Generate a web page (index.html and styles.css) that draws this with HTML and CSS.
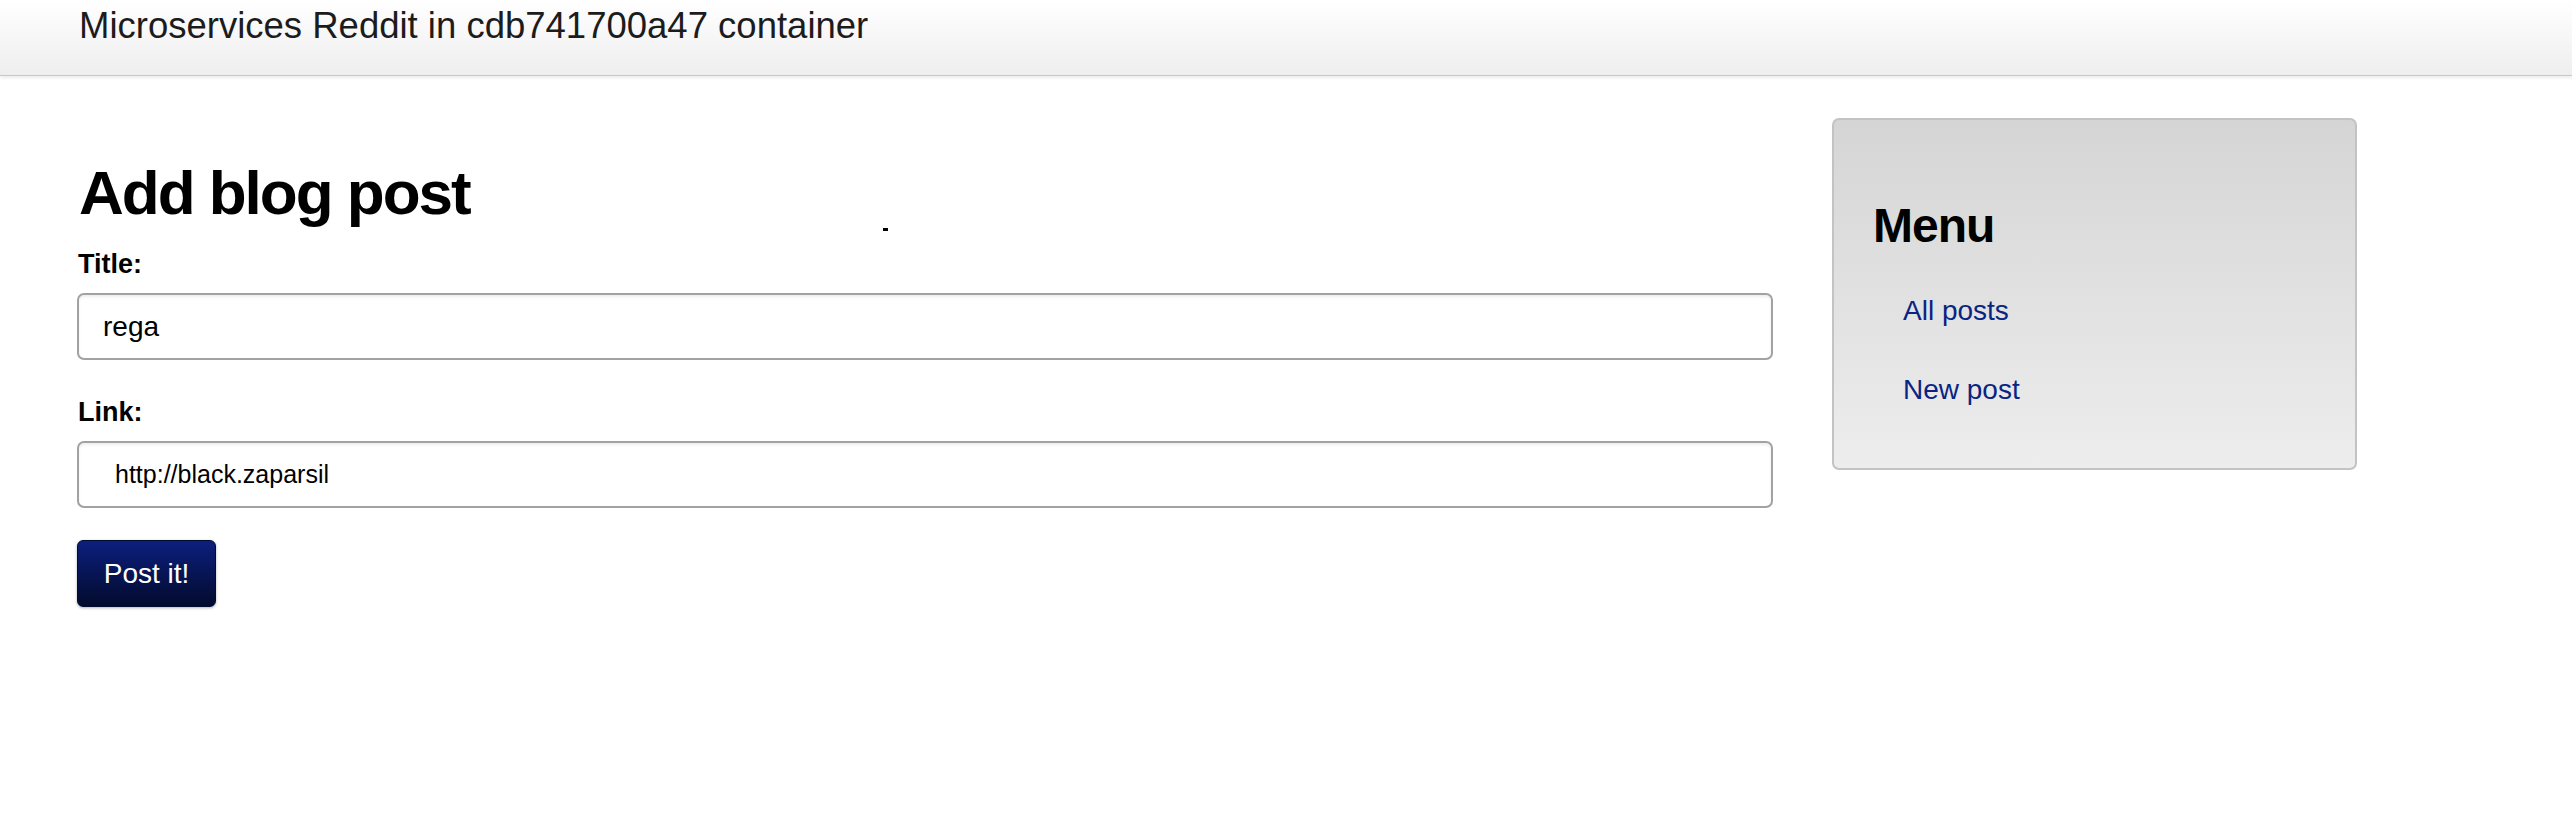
FILE: index.html
```html
<!DOCTYPE html>
<html>
<head>
<meta charset="utf-8">
<title>Microservices Reddit</title>
<link rel="stylesheet" href="styles.css">
</head>
<body>
<header class="topbar">
  <div class="brand">Microservices Reddit in cdb741700a47 container</div>
</header>
<div class="layout">
  <main class="main">
    <h1 class="page-title">Add blog post</h1>
    <form class="post-form">
      <label class="field-label" for="title">Title:</label>
      <input class="field-input" id="title" type="text" value="rega">
      <label class="field-label field-label-gap" for="link">Link:</label>
      <input class="field-input field-input-link" id="link" type="text" value="http://black.zaparsil">
      <button class="submit-btn" type="button">Post it!</button>
    </form>
  </main>
  <aside class="sidebar">
    <h2 class="sidebar-title">Menu</h2>
    <nav class="sidebar-nav">
      <a class="sidebar-link" href="#">All posts</a>
      <a class="sidebar-link" href="#">New post</a>
    </nav>
  </aside>
</div>
<span class="speck"></span>
</body>
</html>
```

FILE: styles.css
```css
html, body {
  margin: 0;
  padding: 0;
  background: #ffffff;
}

body {
  font-family: "Liberation Sans", Arial, Helvetica, sans-serif;
  color: #000;
  position: relative;
  min-height: 836px;
}

.topbar {
  height: 76px;
  box-sizing: border-box;
  padding: 8px 0 0 79px;
  background: linear-gradient(#ffffff, #eeeeee);
  border-bottom: 1px solid #c8c8c8;
  box-shadow: 0 2px 3px rgba(0, 0, 0, 0.08);
}

.brand {
  font-size: 36.5px;
  line-height: 36px;
  color: #1c1c1c;
}

.layout {
  display: flex;
  align-items: flex-start;
  gap: 59px;
  padding: 42px 0 0 77px;
}

.main {
  width: 1696px;
  display: flex;
  flex-direction: column;
}

.page-title {
  margin: 44px 0 0 2px;
  font-size: 62px;
  line-height: 62px;
  font-weight: bold;
  letter-spacing: -2px;
}

.post-form {
  display: flex;
  flex-direction: column;
  align-items: flex-start;
}

.field-label {
  margin: 27px 0 0 1px;
  font-size: 27px;
  line-height: 27px;
  font-weight: bold;
}

.field-label-gap {
  margin-top: 39px;
}

.field-input {
  margin-top: 15px;
  width: 100%;
  height: 67px;
  box-sizing: border-box;
  border: 2px solid #a2a2a2;
  border-radius: 7px;
  box-shadow: inset 0 2px 3px rgba(0, 0, 0, 0.07);
  padding: 0 24px;
  font-family: "Liberation Sans", Arial, Helvetica, sans-serif;
  font-size: 28px;
  color: #000;
  background: #fff;
  outline: none;
}

.field-input-link {
  padding-left: 36px;
  font-size: 25px;
}

.submit-btn {
  margin-top: 32px;
  width: 139px;
  height: 67px;
  box-sizing: border-box;
  border: 1px solid #000c30;
  border-radius: 6px;
  background: linear-gradient(#0c1f7e, #020b2c);
  box-shadow: 0 1px 3px rgba(0, 0, 0, 0.3);
  color: #fff;
  font-family: "Liberation Sans", Arial, Helvetica, sans-serif;
  font-size: 28px;
  padding: 0;
}

.sidebar {
  width: 525px;
  height: 352px;
  box-sizing: border-box;
  border: 2px solid #c3c3c3;
  border-radius: 7px;
  background: linear-gradient(#d5d5d5, #ededed);
  padding: 82px 0 0 39px;
}

.sidebar-title {
  margin: 0;
  font-size: 48px;
  line-height: 48px;
  font-weight: bold;
  letter-spacing: -1px;
}

.sidebar-nav {
  display: flex;
  flex-direction: column;
  gap: 51px;
  margin: 47px 0 0 30px;
}

.sidebar-link {
  font-size: 28px;
  line-height: 28px;
  color: #0a2483;
  text-decoration: none;
}

.speck {
  position: absolute;
  left: 883px;
  top: 228px;
  width: 5px;
  height: 3px;
  background: #000;
}
```
